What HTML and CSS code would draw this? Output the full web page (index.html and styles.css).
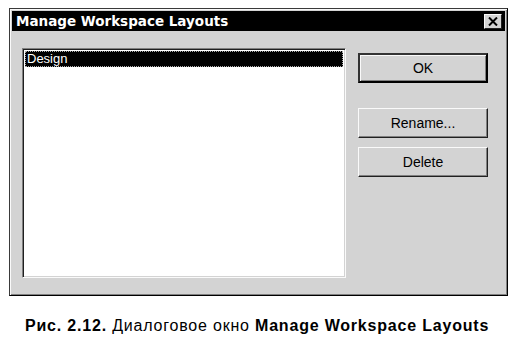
FILE: index.html
```html
<!DOCTYPE html>
<html>
<head>
<meta charset="utf-8">
<link rel="stylesheet" href="styles.css">
</head>
<body>
<div class="page">
  <div class="dialog">
    <div class="titlebar">
      <span class="title">Manage Workspace Layouts</span>
      <span class="close">
        <svg width="10" height="9" viewBox="0 0 10 9"><path d="M1 0.5 L9 8.5 M9 0.5 L1 8.5" stroke="#000" stroke-width="2"/></svg>
      </span>
    </div>
    <div class="content">
      <div class="listbox">
        <div class="item selected">Design</div>
      </div>
      <div class="buttons">
        <div class="btn default">OK</div>
        <div class="btn rename">Rename...</div>
        <div class="btn">Delete</div>
      </div>
    </div>
  </div>
  <div class="caption"><b>Рис. 2.12.</b> Диалоговое окно <b>Manage Workspace Layouts</b></div>
</div>
</body>
</html>
```
FILE: styles.css
```css
html, body {
  margin: 0;
  padding: 0;
  background: #fff;
}
.page {
  display: flex;
  flex-direction: column;
  padding: 8px 0 0 9px;
  width: 518px;
  height: 344px;
  box-sizing: border-box;
}
.dialog {
  width: 499px;
  height: 288px;
  box-sizing: border-box;
  background: #d3d3d3;
  border: 1px solid #000;
  border-left-color: #3a3a3a;
  border-top-color: #3a3a3a;
  box-shadow: inset 1px 1px #fafafa, inset -1px -1px #808080;
  padding: 2px;
  display: flex;
  flex-direction: column;
}
.titlebar {
  height: 20px;
  background: #000;
  display: flex;
  align-items: center;
  justify-content: space-between;
  padding: 0 3px 0 4px;
}
.title {
  font-family: "DejaVu Sans", sans-serif;
  font-weight: bold;
  font-size: 13.5px;
  color: #fff;
  line-height: 20px;
}
.close {
  width: 18px;
  height: 15px;
  box-sizing: border-box;
  background: #d3d3d3;
  border: 1px solid;
  border-color: #fafafa #202020 #202020 #fafafa;
  display: flex;
  align-items: center;
  justify-content: center;
}
.content {
  display: flex;
  padding: 17px 17px 0 10px;
}
.listbox {
  width: 326px;
  height: 230px;
  box-sizing: border-box;
  background: #fff;
  border: 1px solid;
  border-color: #808080 #fafafa #fafafa #808080;
  box-shadow: inset 1px 1px #202020, inset -1px -1px #d3d3d3;
  padding: 2px;
}
.item {
  font-family: "Liberation Sans", Arial, sans-serif;
  font-size: 13px;
  height: 16px;
  line-height: 15px;
  padding-left: 2px;
}
.selected {
  background: #000;
  color: #fff;
  outline: 1px dotted #aaa;
  outline-offset: -1px;
}
.buttons {
  margin-left: 12px;
  display: flex;
  flex-direction: column;
  padding-top: 5px;
}
.btn {
  width: 130px;
  height: 30px;
  box-sizing: border-box;
  border: 1px solid;
  border-color: #fafafa #202020 #202020 #fafafa;
  box-shadow: inset -1px -1px #808080;
  font-family: "Liberation Sans", Arial, sans-serif;
  font-size: 14px;
  color: #000;
  display: flex;
  align-items: center;
  justify-content: center;
  margin-bottom: 9px;
}
.btn.default {
  border: 2px solid #000;
  border-top-color: #333;
  border-left-color: #333;
  box-shadow: inset 1px 1px #fafafa, inset -1px -1px #808080;
  margin-bottom: 25px;
}
.caption {
  margin-top: 20px;
  margin-left: 16px;
  font-family: "Liberation Sans", Arial, sans-serif;
  font-size: 16px;
  letter-spacing: 0.8px;
  color: #000;
  line-height: 19px;
}
.caption b {
  font-weight: bold;
}
```
